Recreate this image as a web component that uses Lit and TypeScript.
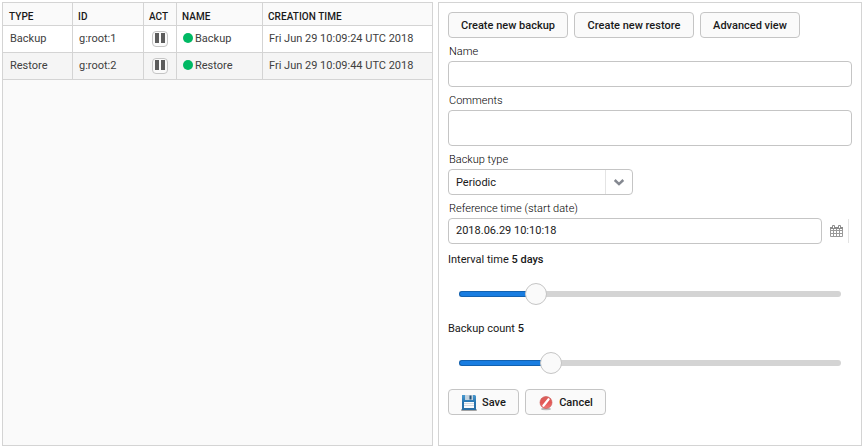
import { LitElement, html, css } from "lit";
import { customElement, property } from "lit/decorators.js";
import { styleMap } from "lit/directives/style-map.js";

@customElement("value-slider")
class ValueSlider extends LitElement {
  @property({ type: Number }) position = 0;
  static styles = css`
    :host { display: block; }
    .rail { position: relative; height: 6px; border-radius: 3px; background: #d4d4d4; }
    .fill { height: 6px; box-sizing: border-box; border: 1px solid #1362b1; border-right: 0;
      border-radius: 3px 0 0 3px; background: #197de1; }
    .knob { position: absolute; top: -8px; width: 22px; height: 22px; margin-left: -11px; box-sizing: border-box;
      border: 1px solid #c5c5c5; border-radius: 50%; background: #fafafa; }
  `;
  render() {
    return html`<div class="rail">
      <div class="fill" style=${styleMap({ width: `${this.position}px` })}></div>
      <div class="knob" style=${styleMap({ left: `${this.position}px` })}></div>
    </div>`;
  }
}

const saveIcon = html`<svg width="16" height="18" viewBox="0 0 16 18">
  <defs><linearGradient id="disk" x1="0" y1="0" x2="0" y2="1"><stop offset="0" stop-color="#4a9ad0"/><stop offset=".5" stop-color="#2674b0"/><stop offset="1" stop-color="#2c6fa3"/></linearGradient></defs>
  <rect x="0" y="15" width="16" height="2" rx="1" fill="#a3a3a3"/>
  <path d="M1 1H14L15 2V16H1Z" fill="url(#disk)"/>
  <rect x="4" y="1" width="8" height="5" fill="#c3d3df"/>
  <rect x="8.500" y="1.500" width="2" height="4" fill="#234e73"/>
  <rect x="3" y="8" width="10" height="6" fill="#fbfcfd"/>
  <path d="M3 9.500H13M3 11.500H13" stroke="#d3dae0"/>
</svg>`;

const cancelIcon = html`<svg width="16" height="18" viewBox="0 0 16 18">
  <defs><linearGradient id="ball" x1="0" y1="0" x2="0" y2="1"><stop offset="0" stop-color="#d8605d"/><stop offset=".5" stop-color="#e35755"/><stop offset="1" stop-color="#f07b78"/></linearGradient></defs>
  <ellipse cx="8" cy="15" rx="5" ry="1.200" fill="#bbb"/>
  <circle cx="8" cy="8.500" r="6" fill="url(#ball)" stroke="#c9504e" stroke-width=".6"/>
  <path d="M5.400 11.700L10.600 5.300" stroke="#fff" stroke-width="2.300" stroke-linecap="round"/>
</svg>`;

const calendarIcon = html`<svg width="13" height="14" viewBox="0 0 13 14">
  <path d="M.5 3.500H12.500V12.500H.5ZM.5 6.500H12.500M.5 9.500H12.500M3.500 5V12.500M6.500 5V12.500M9.500 5V12.500" fill="none" stroke="#999"/>
  <path d="M0 3H13V5H0Z" fill="#8c8c8c"/>
  <path d="M2.500 4V1.500H4.500V4M8.500 4V1.500H10.500V4" fill="#fff" stroke="#8c8c8c"/>
</svg>`;

const chevronIcon = html`<svg width="12" height="8" viewBox="0 0 12 8">
  <path d="M1.700 2L6 6.100L10.300 2" fill="none" stroke="#848890" stroke-width="2.500"/>
</svg>`;

@customElement("app-root")
class AppRoot extends LitElement {
  private rows = [
    { type: "Backup", id: "g:root:1", name: "Backup", time: "Fri Jun 29 10:09:24 UTC 2018" },
    { type: "Restore", id: "g:root:2", name: "Restore", time: "Fri Jun 29 10:09:44 UTC 2018" },
  ];

  static styles = css`
    :host { display: flex; gap: 5px; width: 865px; height: 448px; padding: 2px 3px 2px 2px; box-sizing: border-box;
      background: #fff; color: #191919; font: 11px/16px Roboto, sans-serif; }
    .panel { box-sizing: border-box; height: 444px; border: 1px solid #d4d4d4; }
    .list { width: 431px; background: #fafafa; }
    .row { display: grid; grid-template-columns: 70px 71px 33px 86px 169px; height: 26px; background: #fff;
      border-bottom: 1px solid #d4d4d4; color: #404040; }
    .row.odd { background: #f5f5f5; }
    .row.head { height: 22px; background: #fafafa; color: #191919; font-weight: 500; font-size: 10px; letter-spacing: .06px; }
    .cell { display: flex; align-items: center; padding-left: 6px; border-right: 1px solid #d4d4d4; box-sizing: border-box;
      white-space: nowrap; }
    .cell:last-child { border-right: 0; }
    .head .cell { padding: 5px 0 0 5px; }
    .cell.first { padding-left: 7px; }
    .head .cell.first { padding-left: 6px; }
    .cell.act { padding: 0 0 0 8px; }
    .head .cell.act { padding: 5px 0 0 5px; }
    .cell.name { padding-left: 6px; gap: 2px; }
    .head .cell.name { padding-left: 5px; }
    .pause { display: flex; align-items: flex-start; justify-content: center; gap: 2px; width: 16px; height: 16px;
      padding-top: 1px; box-sizing: border-box; border: 1px solid #c5c5c5; border-radius: 4px; background: #fafafa; }
    .pause i { width: 4px; height: 10px; background: #5c5c5c; }
    .dot { width: 10px; height: 10px; margin-bottom: 2px; border-radius: 50%; background: #00b964; }
    .form { width: 424px; padding: 9px; background: #fff; }
    .buttons { display: flex; gap: 6px; }
    button { display: flex; align-items: center; justify-content: center; height: 26px; box-sizing: border-box; padding: 1px 0 0;
      border: 1px solid #c5c5c5; border-radius: 4px; background: #fafafa; color: #191919;
      font: 500 11px/17px Roboto, sans-serif; white-space: nowrap; }
    .wide { width: 120px; }
    .medium { width: 100px; }
    .save { width: 71px; gap: 5px; }
    .cancel { width: 81px; gap: 5px; }
    label { display: block; height: 23px; padding: 6px 0 0 1px; box-sizing: border-box; color: #000; font-weight: 300; line-height: 16px; }
    .field { display: flex; align-items: center; box-sizing: border-box; height: 26px; padding-left: 7px;
      border: 1px solid #c5c5c5; border-radius: 4px; background: #fff; }
    .area { height: 36px; }
    .select { width: 185px; padding: 0; }
    .select .value { flex: 1; padding: 2px 0 0 7px; }
    .arrow { display: flex; align-items: center; justify-content: center; width: 26px; height: 24px; border-left: 1px solid #e4e4e4; }
    .date { display: flex; align-items: center; }
    .date .field { width: 374px; }
    .picker { display: flex; align-items: center; width: 18px; height: 24px; padding-left: 8px; border-right: 1px solid #e4e4e4; }
    .caption { margin-top: 8px; height: 16px; }
    .caption b { font-weight: 500; }
    value-slider { margin: 23px 11px 0; }
    .caption.second { margin-top: 24px; }
    .actions { margin-top: 23px; }
  `;

  render() {
    return html`
      <div class="panel list">
        <div class="row head">
          <div class="cell first">TYPE</div><div class="cell">ID</div><div class="cell act">ACT</div>
          <div class="cell name">NAME</div><div class="cell">CREATION TIME</div>
        </div>
        ${this.rows.map((r, i) => html`<div class="row ${i % 2 ? "odd" : ""}">
          <div class="cell first">${r.type}</div><div class="cell">${r.id}</div>
          <div class="cell act"><span class="pause"><i></i><i></i></span></div>
          <div class="cell name"><span class="dot"></span>${r.name}</div>
          <div class="cell">${r.time}</div>
        </div>`)}
      </div>
      <div class="panel form">
        <div class="buttons">
          <button class="wide">Create new backup</button>
          <button class="wide">Create new restore</button>
          <button class="medium">Advanced view</button>
        </div>
        <label>Name</label>
        <div class="field"></div>
        <label>Comments</label>
        <div class="field area"></div>
        <label>Backup type</label>
        <div class="field select"><span class="value">Periodic</span><span class="arrow">${chevronIcon}</span></div>
        <label>Reference time (start date)</label>
        <div class="date"><div class="field">2018.06.29 10:10:18</div><span class="picker">${calendarIcon}</span></div>
        <div class="caption">Interval time <b>5 days</b></div>
        <value-slider .position=${77}></value-slider>
        <div class="caption second">Backup count <b>5</b></div>
        <value-slider .position=${92}></value-slider>
        <div class="buttons actions">
          <button class="save">${saveIcon}<span>Save</span></button>
          <button class="cancel">${cancelIcon}<span>Cancel</span></button>
        </div>
      </div>`;
  }
}
